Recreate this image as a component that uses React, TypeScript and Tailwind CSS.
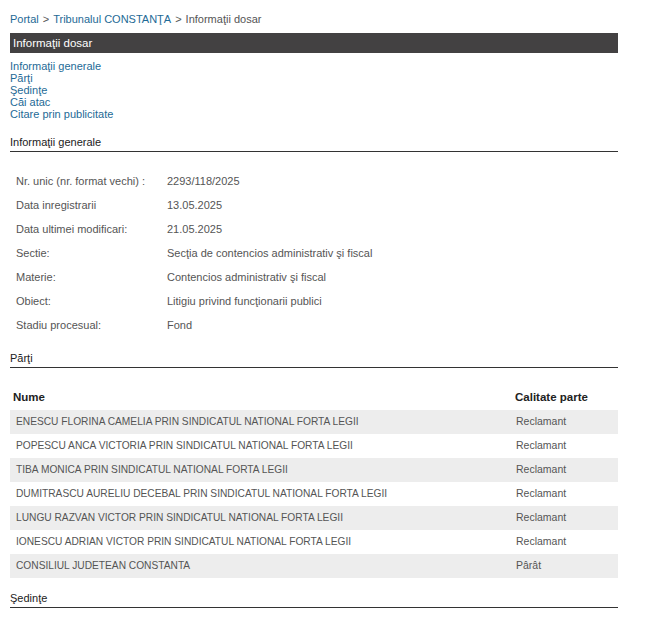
import React from 'react';

const info = [
  ['Nr. unic (nr. format vechi) :', '2293/118/2025'],
  ['Data inregistrarii', '13.05.2025'],
  ['Data ultimei modificari:', '21.05.2025'],
  ['Sectie:', 'Secţia de contencios administrativ şi fiscal'],
  ['Materie:', 'Contencios administrativ şi fiscal'],
  ['Obiect:', 'Litigiu privind funcţionarii publici'],
  ['Stadiu procesual:', 'Fond'],
];

const parti = [
  ['ENESCU FLORINA CAMELIA PRIN SINDICATUL NATIONAL FORTA LEGII', 'Reclamant'],
  ['POPESCU ANCA VICTORIA PRIN SINDICATUL NATIONAL FORTA LEGII', 'Reclamant'],
  ['TIBA MONICA PRIN SINDICATUL NATIONAL FORTA LEGII', 'Reclamant'],
  ['DUMITRASCU AURELIU DECEBAL PRIN SINDICATUL NATIONAL FORTA LEGII', 'Reclamant'],
  ['LUNGU RAZVAN VICTOR PRIN SINDICATUL NATIONAL FORTA LEGII', 'Reclamant'],
  ['IONESCU ADRIAN VICTOR PRIN SINDICATUL NATIONAL FORTA LEGII', 'Reclamant'],
  ['CONSILIUL JUDETEAN CONSTANTA', 'Pârât'],
];

function SectionTitle({ children }: { children: React.ReactNode }) {
  return (
    <div className="border-b border-[#333] pb-[2px] text-[11px] leading-[14px] text-[#222]">
      {children}
    </div>
  );
}

export default function App() {
  return (
    <div className="min-h-[620px] w-[628px] bg-white px-[10px] pt-[12px] font-['Liberation_Sans',Arial,sans-serif]">
      {/* breadcrumb */}
      <div className="text-[11px] leading-[14px] text-[#555]">
        <span className="text-[#1e6a96]">Portal</span>
        <span className="mx-[4px]">&gt;</span>
        <span className="text-[#1e6a96]">Tribunalul CONSTANŢA</span>
        <span className="mx-[4px]">&gt;</span>
        <span>Informaţii dosar</span>
      </div>

      <div className="mt-[7px] h-[20px] bg-[#434142] pl-[3px] text-[11.5px] leading-[20px] text-white">
        Informaţii dosar
      </div>

      <div className="mt-[7px] flex flex-col text-[11px] leading-[12px] text-[#1e6a96]">
        <span>Informaţii generale</span>
        <span>Părţi</span>
        <span>Şedinţe</span>
        <span>Căi atac</span>
        <span>Citare prin publicitate</span>
      </div>

      <div className="mt-[15px]">
        <SectionTitle>Informaţii generale</SectionTitle>
      </div>

      <div className="mt-[17px] flex flex-col text-[11px] text-[#555]">
        {info.map(([k, v]) => (
          <div key={k} className="flex h-[24px] items-center">
            <span className="w-[157px] pl-[6px]">{k}</span>
            <span>{v}</span>
          </div>
        ))}
      </div>

      <div className="mt-[14px]">
        <SectionTitle>Părţi</SectionTitle>
      </div>

      <div className="mt-[18px]">
        <div className="flex h-[24px] items-center text-[11.5px] font-bold text-[#222]">
          <span className="w-[505px] pl-[3px]">Nume</span>
          <span>Calitate parte</span>
        </div>
        {parti.map(([n, c], i) => (
          <div
            key={n}
            className={`flex h-[24px] items-center text-[#555] ${i % 2 === 0 ? 'bg-[#ededed]' : 'bg-white'}`}
          >
            <span className="w-[500px] pl-[6px] text-[10.2px]">{n}</span>
            <span className="pl-[6px] text-[10.5px]">{c}</span>
          </div>
        ))}
      </div>

      <div className="mt-[13px]">
        <SectionTitle>Şedinţe</SectionTitle>
      </div>
    </div>
  );
}
